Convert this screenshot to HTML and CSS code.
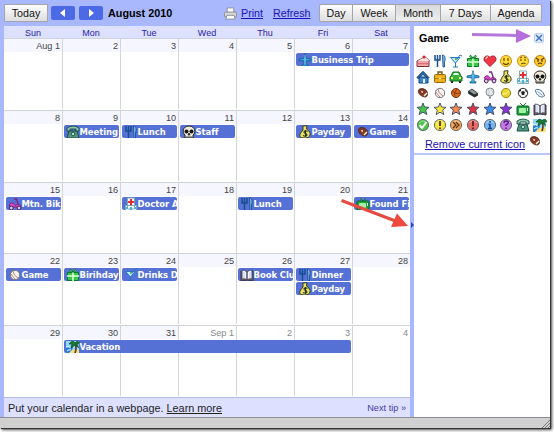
FILE: index.html
```html
<!DOCTYPE html>
<html lang="en">
<head>
<meta charset="utf-8">
<title>Calendar</title>
<link rel="stylesheet" href="styles.css">
</head>
<body>
<svg class="sprite" aria-hidden="true">
  <defs>
    <symbol id="cake" viewBox="0 0 14 14"><path d="M1 7 9 3l4 3v6.500H1z" fill="#f2a9a6" stroke="#7c3038"/><path d="M1.500 9.700h11" stroke="#d9606a"/><path d="m1.500 7 7.500-4 4 3v1z" fill="#ffe3de"/><circle cx="8" cy="3" r="1.500" fill="#d8202c"/></symbol>
    <symbol id="fork" viewBox="0 0 14 14"><path d="M2 1v5h5V1M4.500 1v12" fill="none" stroke="#164e91" stroke-width="1.500"/><path d="M9.500 1c3 0 3 4 2 7v5h-1.500z" fill="#85b9e8" stroke="#164e91" stroke-width=".9"/></symbol>
    <symbol id="drink" viewBox="0 0 14 14"><path d="M1.500 3.500h9.500L6.500 9z" fill="#bdeaff" stroke="#2877ba"/><path d="M6.500 9v4M4 13h5M8 5l3-4 2 1" fill="none" stroke="#2877ba"/><circle cx="7" cy="5" r="1" fill="#35a747"/></symbol>
    <symbol id="gift" viewBox="0 0 14 14"><path d="M1.500 4.500h11v8h-11z" fill="#36c846" stroke="#08782a"/><path d="M1 8h12M7 4v9" stroke="#e5ffda" stroke-width="1.500"/><path d="M7 4C3 4 3 1 5 1.500L7 4c4 0 4-3 2-2.500z" fill="#8ce781" stroke="#08782a"/></symbol>
    <symbol id="heart" viewBox="0 0 14 14"><path d="M7 12.500 1.500 7C-.5 3 4 0 7 3.500 10 0 14.500 3 12.500 7z" fill="#ef3644" stroke="#a51b2a"/><path d="M3 5q0-2 2-2" fill="none" stroke="#ffc1c1" stroke-width="1.300"/></symbol>
    <symbol id="smile" viewBox="0 0 14 14"><circle cx="7" cy="7" r="5.500" fill="#ffdc37" stroke="#cc8b12"/><path d="M5 4v3M9 4v3M4 9q3 3 6 0" fill="none" stroke="#5d3b05" stroke-width="1.100"/></symbol>
    <symbol id="worried" viewBox="0 0 14 14"><circle cx="7" cy="7" r="5.500" fill="#ffdc37" stroke="#cc8b12"/><path d="M5 5v2M9 5v2M4 4l2-1M8 3l2 1M5 10q2-1.500 4.500-.5" fill="none" stroke="#5d3b05"/></symbol>
    <symbol id="angry" viewBox="0 0 14 14"><circle cx="7" cy="7" r="5.500" fill="#ffcf2d" stroke="#c27b0c"/><path d="m3 4 3 2M11 4 8 6M5 6v2M9 6v2M5 10q2-2 4 0" fill="none" stroke="#5d3205" stroke-width="1.100"/></symbol>
    <symbol id="house" viewBox="0 0 14 14"><path d="M3 7h9v6H3z" fill="#3d86cc" stroke="#123e73"/><path d="M.8 7.500 7 1.200l6 6.300-1 1-5-4-5 4z" fill="#2467b1" stroke="#103866" stroke-width=".8"/><path d="M7 9h2v4H7z" fill="#d8f1ff"/></symbol>
    <symbol id="case" viewBox="0 0 14 14"><path d="M5 4V2h4v2" fill="none" stroke="#765312" stroke-width="1.300"/><rect x="1.500" y="4.500" width="11" height="8" rx="1" fill="#edb21d" stroke="#946507"/><path d="M2 8.500h10" stroke="#bd860d"/><path d="M6 7.500h2v1.500H6z" fill="#fff0a0"/></symbol>
    <symbol id="car" viewBox="0 0 14 14"><path d="m2 6 2-4h6l2 4 1 1v4H1V7z" fill="#36b63d" stroke="#0a701b"/><path d="m4 5 1-2h4l1 2z" fill="#e5fff3"/><path d="M2 11h2v2H2zm8 0h2v2h-2z" fill="#263429"/><path d="M2 7h2v2H2zm8 0h2v2h-2z" fill="#fff477"/></symbol>
    <symbol id="plane" viewBox="0 0 14 14"><path d="M7 .7 8 5l5 1v1.500L8 8v3l2 1v1H4v-1l2-1V8l-5-.5V6l5-1z" fill="#37a5d7" stroke="#125c91" stroke-width=".8"/><path d="M7 2v9" stroke="#a8e8ff" stroke-width=".7"/></symbol>
    <symbol id="scooter" viewBox="0 0 14 14"><path d="M6 2h2.500l2.500 8" fill="none" stroke="#7b2486" stroke-width="1.300"/><path d="M1.500 7q2-2 4-1l2 2.500L10 7l3 2v1H2z" fill="#d745c4" stroke="#74206f" stroke-width=".8"/><circle cx="3.300" cy="11" r="1.900" fill="#ddc8df" stroke="#4d2260"/><circle cx="11" cy="11" r="1.900" fill="#ddc8df" stroke="#4d2260"/></symbol>
    <symbol id="money" viewBox="0 0 14 14"><path d="m5 1 4-.3L8.500 4c6 4 4 9-1.500 9S-.5 11 5 5z" fill="#eee169" stroke="#343c14"/><path d="M9.500 6.500c-3-2-5 1-2 2s1 4-2.500 2M7.500 5v7" fill="none" stroke="#273719" stroke-width="1.100"/></symbol>
    <symbol id="hospital" viewBox="0 0 14 14"><path d="M1.500 8.500h11v5h-11zM3.500 1h7v11h-7z" fill="#fff" stroke="#80aabb"/><path d="M7 2v6M4 5h6" stroke="#e92b32" stroke-width="2"/><path d="M2 10h2v2H2zm8 0h2v2h-2zm-4 0h2v3H6z" fill="#41b5d3"/></symbol>
    <symbol id="skull" viewBox="0 0 14 14"><path d="M3 10C0 8 .5 1 7 1s7 7 4 9v3H3z" fill="#eeeadb" stroke="#25241e"/><circle cx="4.500" cy="6.500" r="2" fill="#151515"/><circle cx="9.500" cy="6.500" r="2" fill="#151515"/><path d="m7 8-1 2h2zM5 11v2M7 11v2M9 11v2" stroke="#222" stroke-width=".8"/></symbol>
    <symbol id="football" viewBox="0 0 14 14"><path d="M2.500 4c2-2.500 7-1.500 8.500 1.500 1 3 .5 5-1.500 5.500C6 11 1.500 8 2.500 4z" fill="#823a25" stroke="#492014" stroke-width=".8"/><path d="m5 5 2 2M5.500 6.500 7 5" stroke="#f0d5c7" stroke-width=".8"/><path d="m8 10 3-3" stroke="#fff1e4" stroke-width="1.400"/></symbol>
    <symbol id="baseball" viewBox="0 0 14 14"><circle cx="7" cy="7" r="4.700" fill="#f5f3ee" stroke="#777"/><path d="M5 3q0 4 5 7M3 6q2 3 4 5" fill="none" stroke="#a66" stroke-width=".8"/></symbol>
    <symbol id="basketball" viewBox="0 0 14 14"><circle cx="7" cy="7" r="4.500" fill="#db681b" stroke="#713814"/><path d="M3 5q4 4 8 2M8 3q-4 4-2 8" fill="none" stroke="#713814" stroke-width=".8"/></symbol>
    <symbol id="puck" viewBox="0 0 14 14"><path d="m2.500 5 3.500-2 5.500 4v2.500l-3 1.500-6-3.500z" fill="#252c2f" stroke="#111" stroke-width=".6"/><path d="m3 5 3-1.500L11 7 8.500 8.500z" fill="#8d999d"/></symbol>
    <symbol id="golf" viewBox="0 0 14 14"><circle cx="7" cy="6" r="4" fill="#e6e9ec" stroke="#858e96"/><path d="M5.500 10.500h3l-1.500 3z" fill="#7d8a91"/><path d="M5 4h1m2 0h1M6 6h1m2 0h1M5 8h1" stroke="#a9b1b8"/></symbol>
    <symbol id="tennis" viewBox="0 0 14 14"><circle cx="7" cy="7" r="4.600" fill="#e9d72d" stroke="#9c8515"/><path d="M3 8q4 1 7-3" fill="none" stroke="#fff9b2"/></symbol>
    <symbol id="soccer" viewBox="0 0 14 14"><circle cx="7" cy="7" r="4.700" fill="#f5f5f5" stroke="#333"/><path d="m7 5 2 1-1 3H6L5 6zM3 4l2-1v2L3 6zm7-1 1 3h-1L9 4zm0 6 1 1-2 1zM3 9l2 1v1z" fill="#202020"/></symbol>
    <symbol id="rugby" viewBox="0 0 14 14"><path d="M2.500 4c3-2 8 1 9 6-3 3-9-1-9-6z" fill="#eff7ff" stroke="#546f95"/><path d="m4.500 5.500 5 4" stroke="#7da2d5"/></symbol>
    <symbol id="star" viewBox="0 0 14 14"><path d="m7 1 1.600 4 4.400.3-3.300 2.800 1.100 4.500L7 10.200l-3.800 2.400 1.100-4.500L1 5.300 5.400 5z" fill="currentColor" stroke="#3c4564" stroke-width=".9"/></symbol>
    <symbol id="tv" viewBox="0 0 14 14"><path d="m4 1 3 3 3-3" fill="none" stroke="#1c7b28"/><rect x="1" y="4" width="12" height="9" rx="1" fill="#1da43b" stroke="#096022"/><rect x="3" y="6" width="7" height="5" rx="1" fill="#a6efa7"/><path d="M11.500 6v3" stroke="#d5ffce"/></symbol>
    <symbol id="book" viewBox="0 0 14 14"><path d="M1 3v10l6-1 6 1V3h-2" fill="#83604a" stroke="#32334a"/><path d="M2 2q3 0 5 2v8q-2-2-5-1zm10 0Q9 2 7 4v8q2-2 5-1z" fill="#f5f5ff" stroke="#3e4665" stroke-width=".9"/><path d="M4 4v6M10 4v6" stroke="#c3c9e6"/></symbol>
    <symbol id="disc" viewBox="0 0 14 14"><circle cx="7" cy="7" r="5.600" fill="currentColor" stroke="#59615d" stroke-width=".9"/><path d="M3 5q4-4 8 0" fill="none" stroke="#fff" stroke-opacity=".45"/></symbol>
    <symbol id="check" viewBox="0 0 14 14"><use href="#disc"/><path d="m3.500 7 2.500 3 4.500-6" fill="none" stroke="#fff" stroke-width="2"/></symbol>
    <symbol id="alert" viewBox="0 0 14 14"><use href="#disc"/><path d="M7 3v5M7 9.500v1.700" stroke="#51201f" stroke-width="1.700"/></symbol>
    <symbol id="next" viewBox="0 0 14 14"><use href="#disc"/><path d="m4 4 3 3-3 3M7 4l3 3-3 3" fill="none" stroke="#603006" stroke-width="1.200"/></symbol>
    <symbol id="info" viewBox="0 0 14 14"><use href="#disc"/><path d="M7 3v1.600M5.500 6.500H7V10M5 10.500h4" fill="none" stroke="#123f87" stroke-width="1.500"/></symbol>
    <symbol id="help" viewBox="0 0 14 14"><use href="#disc"/><path d="M5 5q0-2 2-2c4 0 2 3 0 4v1M7 9.500V11" fill="none" stroke="#4d1575" stroke-width="1.400"/></symbol>
    <symbol id="phone" viewBox="0 0 14 14"><path d="M3 6h8l2 7H1z" fill="#539580" stroke="#184d43"/><path d="M1 6V3q6-4 12 0v3h-3V4H4v2z" fill="#8dc5ab" stroke="#184d43" stroke-width=".9"/><circle cx="7" cy="9" r="1.800" fill="#b5e0cf" stroke="#24604e"/></symbol>
    <symbol id="palm" viewBox="0 0 14 14"><path d="M0 1h13v12H0z" fill="#8fd8f7"/><path d="M0 7h7l-2 7H0z" fill="#277fd0"/><path d="m2 14 4-4 7-1v5z" fill="#f6df85"/><path d="M0 7q3-1 5 1M1 11q2-2 4-1" fill="none" stroke="#f4fdff"/><path d="M9 4q2 4 0 9" fill="none" stroke="#5b3a22" stroke-width="1.600"/><path d="M3 4q4-5 6-1 3-4 5 1l-3-.5 1.500 4L9 5 5 8l1-4z" fill="#1c7a32" stroke="#0c5426" stroke-width=".8"/></symbol>
  </defs>
</svg>

<div class="window">
  <header class="toolbar">
    <button class="button today">Today</button>
    <button class="step"><svg viewBox="0 0 6 8"><path d="M5 0v8L0 4z"/></svg></button>
    <button class="step"><svg viewBox="0 0 6 8"><path d="M1 0v8l5-4z"/></svg></button>
    <h1>August 2010</h1>
    <svg class="printer" viewBox="0 0 14 13"><path d="M3.500.5h7v5h-7z" fill="#fff" stroke="#8c9098"/><rect x=".5" y="5" width="13" height="5.500" rx="1.500" fill="#d4d6da" stroke="#85888f"/><path d="M3 8.500h8l1 4H2z" fill="#fff" stroke="#8c9098"/></svg>
    <a class="print">Print</a><a class="refresh">Refresh</a>
    <nav class="views"><span class="day">Day</span><span class="week">Week</span><span class="month active">Month</span><span class="seven">7 Days</span><span class="agenda">Agenda</span></nav>
  </header>
  <div class="content">
    <main class="calendar">
      <div class="weekdays"><span>Sun</span><span>Mon</span><span>Tue</span><span>Wed</span><span>Thu</span><span>Fri</span><span>Sat</span></div>
      <div class="weeks" id="weeks"></div>
      <footer class="tip"><span>Put your calendar in a webpage. <a>Learn more</a></span><a class="next-tip">Next tip »</a></footer>
    </main>
    <div class="splitter"><svg viewBox="0 0 3 6"><path d="M0 0v6l3-3z" fill="#283fc4"/></svg></div>
    <aside>
      <section class="picker">
        <div class="picker-head"><h2>Game</h2><button class="close"><svg viewBox="0 0 8 8"><path d="m1 1 6 6M7 1 1 7" stroke="#3d70c4" stroke-width="1.500"/></svg></button></div>
        <div class="icons" id="icons"></div>
        <div class="remove"><a>Remove current icon</a><svg class="icon"><use href="#football"/></svg></div>
      </section>
    </aside>
  </div>
  <div class="status"><svg viewBox="0 0 9 9"><path d="m1 9 8-8M4 9l5-5M7 9l2-2" stroke="#777"/></svg></div>
  <svg class="pointers" viewBox="0 0 554 432"><path d="m472 34.500 46 1" stroke="#b478dc" stroke-width="3"/><path d="m516 29 15 7-15 7z" fill="#b56fdc"/><path d="m341.500 200.500 54 20.500" stroke="#e44c41" stroke-width="3"/><path d="m397 213.500 11 12.500-17 1z" fill="#ef493d"/></svg>
</div>
<script src="calendar.js"></script>
</body>
</html>
```
FILE: styles.css
```css
* { box-sizing: border-box; }
body {
  margin: 0;
  width: 554px;
  height: 432px;
  overflow: hidden;
  background: #fff;
  font: 10.7px "Liberation Sans", Arial, sans-serif;
  color: #222;
}
button { padding: 0; font: inherit; }
h1, h2 { margin: 0; color: #000; }
.sprite { position: absolute; width: 0; height: 0; }
.window {
  position: relative;
  display: flex;
  flex-direction: column;
  width: 550px;
  height: 428px;
  background: #a9b8fc;
  box-shadow: 1px 1px 1px #333, 2px 2px 3px #555;
}
.toolbar {
  display: flex;
  align-items: center;
  height: 26px;
  padding-left: 4px;
}
.button, .views span {
  height: 18px;
  border: 1px solid #a2a5ae;
  background: linear-gradient(#fdfdfd, #dedede);
  color: #111;
}
.today { width: 44px; margin-right: 3px; border-radius: 1px; }
.step {
  display: grid;
  place-items: center;
  width: 24px;
  height: 14px;
  margin-right: 4px;
  border: 0;
  border-radius: 2px;
  background: #4c6ae6;
}
.step svg { width: 6px; height: 8px; fill: #fff; }
h1 { width: 116px; margin-left: 1px; font-size: 10.8px; }
.printer { width: 13px; height: 13px; margin-right: 4px; }
.print, .refresh, .remove a { color: #1b10b8; text-decoration: underline; }
.print { width: 32px; }
.refresh { width: 46px; }
.views { display: flex; }
.views span { line-height: 16px; text-align: center; border-right-width: 0; }
.views span:first-child { border-radius: 2px 0 0 2px; }
.views span:last-child { border-right-width: 1px; border-radius: 0 2px 2px 0; }
.views .day { width: 33px; }
.views .week { width: 43px; }
.views .month { width: 45px; }
.views .seven { width: 50px; }
.views .agenda { width: 52px; }
.views .active { background: linear-gradient(#d9d9d9, #eee); }

.content { display: flex; height: 391px; padding-left: 4px; }
.calendar { display: flex; flex-direction: column; width: 406px; background: #fff; }
.weekdays {
  display: grid;
  grid-template-columns: repeat(7, 58px);
  height: 12px;
  background: #dde1ff;
  color: #291ba8;
  font-size: 9px;
  line-height: 15px;
  text-align: center;
}
.weeks { height: 359px; display: grid; grid-template-rows: 72px 72px 71px 72px 72px; }
.week-row {
  display: grid;
  grid-template-columns: repeat(7, 58px);
  grid-template-rows: 13px 13px 13px;
  row-gap: 1px;
  border-top: 1px solid #d0d2da;
}
.cell { grid-row: 1 / 5; height: 70px; border-left: 1px solid #d4d5da; }
.cell:first-child { border-left: 0; }
.date {
  display: block;
  height: 13px;
  padding-right: 2px;
  background: #f6f7fe;
  color: #444;
  font-size: 9.1px;
  line-height: 14px;
  text-align: right;
}
.cell.muted .date { background: #fff; color: #888; }
.event {
  display: flex;
  align-items: center;
  height: 13px;
  margin: 0 1px 0 2px;
  padding-left: 2px;
  overflow: hidden;
  border-radius: 2px;
  background: #5571d6;
  color: #fff;
  font: bold 9.400px/13px "DejaVu Sans Condensed", "Noto Sans", sans-serif;
  white-space: nowrap;
}
.event span { margin-left: -.5px; letter-spacing: -.04px; }
.icon { flex: none; display: block; width: 14px; height: 14px; }
.tip {
  display: flex;
  align-items: center;
  justify-content: space-between;
  height: 20px;
  padding: 1px 4px 0;
  border-top: 1px solid #b5bce2;
  background: #dde1ff;
  font-size: 10.850px;
}
.tip a { text-decoration: underline; }
.tip .next-tip { color: #4938a9; font-size: 9.200px; text-decoration: none; }
.splitter { display: grid; place-items: center; width: 4px; padding-top: 7px; }
.splitter svg { width: 3px; height: 6px; }
aside { width: 136px; background: #fff; }
.picker { height: 129px; padding: 5px 5px 0 2px; border-bottom: 2px solid #bdc8fa; }
.picker-head { display: flex; align-items: center; justify-content: space-between; height: 13px; padding: 0 1px 0 3px; }
h2 { font-size: 10.800px; }
.close {
  display: grid;
  place-items: center;
  width: 10px;
  height: 10px;
  border: 1px solid #b9cdf5;
  border-radius: 2px;
  background: #e4edff;
}
.close svg { width: 8px; height: 8px; }
.icons { display: grid; grid-template-columns: repeat(8, 14px); grid-auto-rows: 14px; gap: 2px 2.700px; margin-top: 10px; }
.remove { display: flex; align-items: center; height: 15px; margin: 4px 0 0 9px; font-size: 10.850px; }
.remove .icon { margin: -5px 0 0 3px; }
.green { color: #48c548; }
.yellow { color: #f3e738; }
.orange { color: #ef8a50; }
.red { color: #dc3442; }
.blue { color: #398ce8; }
.purple { color: #8c32d3; }
.pale-orange { color: #efa45d; }
.pale-red { color: #e66b6b; }
.pale-blue { color: #76b4ed; }
.pale-purple { color: #c478e6; }
.status {
  display: flex;
  align-items: center;
  justify-content: flex-end;
  height: 11px;
  border-top: 1px solid #8c8d93;
  background: #d0d0d0;
}
.status svg { width: 9px; height: 9px; }
.pointers { position: absolute; top: 0; left: 0; width: 554px; height: 432px; pointer-events: none; }
```
FILE: calendar.js
```js
const weeks = [
  { days: ["Aug 1", 2, 3, 4, 5, 6, 7], events: [[6, 2, "plane", "Business Trip"]] },
  { days: [8, 9, 10, 11, 12, 13, 14], events: [[2, 1, "phone", "Meeting"], [3, 1, "fork", "Lunch"], [4, 1, "skull", "Staff"], [6, 1, "money", "Payday"], [7, 1, "football", "Game"]] },
  { days: [15, 16, 17, 18, 19, 20, 21], events: [[1, 1, "scooter", "Mtn. Bik"], [3, 1, "hospital", "Doctor A"], [5, 1, "fork", "Lunch"], [7, 1, "tv", "Found Fi"]] },
  { days: [22, 23, 24, 25, 26, 27, 28], events: [[1, 1, "baseball", "Game"], [2, 1, "gift", "Birihday"], [3, 1, "drink", "Drinks D"], [5, 1, "book", "Book Clu"], [6, 1, "fork", "Dinner"], [6, 1, "money", "Payday", 3]] },
  { days: [29, 30, 31, "Sep 1", 2, 3, 4], muted: 3, events: [[2, 5, "palm", "Vacation"]] }
];
const icon = (name, color = "") => `<svg class="icon ${color}"><use href="#${name}"/></svg>`;
document.getElementById("weeks").innerHTML = weeks.map(week => {
  const cells = week.days.map((day, i) => `<div class="cell ${i >= (week.muted ?? 7) ? "muted" : ""}" style="grid-column:${i + 1}"><span class="date">${day}</span></div>`).join("");
  const events = week.events.map(([column, span, name, title, row = 2]) => `<div class="event" style="grid-column:${column} / span ${span};grid-row:${row}">${icon(name)}<span>${title}</span></div>`).join("");
  return `<div class="week-row">${cells}${events}</div>`;
}).join("");

const choices = "cake fork drink gift heart smile worried angry house case car plane scooter money hospital skull football baseball basketball puck golf tennis soccer rugby star:green star:yellow star:orange star:red star:blue star:purple tv book check:green alert:yellow next:pale-orange alert:pale-red info:pale-blue help:pale-purple phone palm";
document.getElementById("icons").innerHTML = choices.split(" ").map(choice => icon(...choice.split(":"))).join("");
```
